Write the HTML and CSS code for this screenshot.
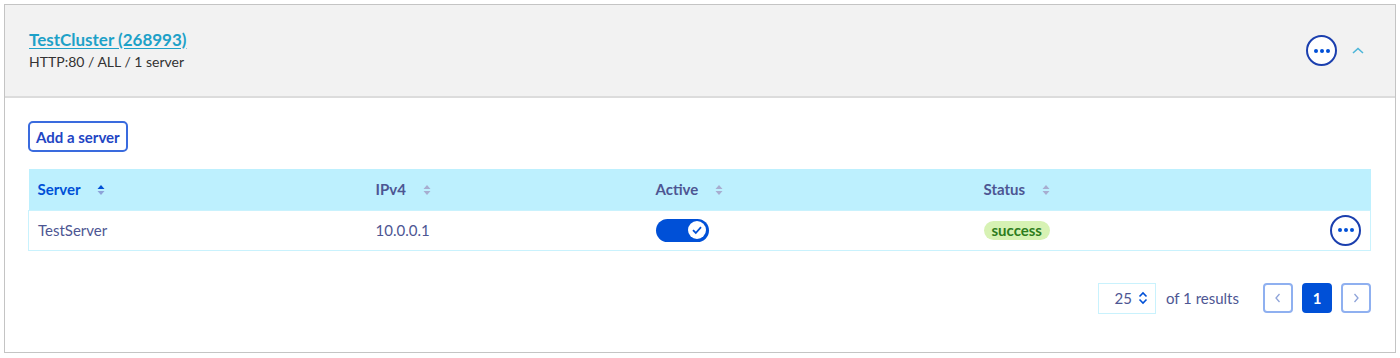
FILE: index.html
```html
<!DOCTYPE html>
<html>
<head>
<meta charset="utf-8">
<link rel="stylesheet" href="styles.css">
</head>
<body>
<div class="card">
  <div class="card-head">
    <div class="titles">
      <a class="title" href="#">TestCluster (268993)</a>
      <div class="subtitle">HTTP:80 / ALL / 1 server</div>
    </div>
    <div class="head-actions">
      <button class="dots"><span></span><span></span><span></span></button>
      <svg class="chev" width="14" height="10" viewBox="0 0 14 10"><path d="M2 7 L7 2.5 L12 7" fill="none" stroke="#4db6d9" stroke-width="1.6"/></svg>
    </div>
  </div>
  <div class="card-body">
    <button class="add-btn">Add a server</button>
    <table class="tbl">
      <colgroup><col class="c1"><col class="c2"><col class="c3"><col class="c4"><col class="c5"></colgroup>
      <thead>
        <tr>
          <th class="sorted">Server <svg class="sort" width="8" height="12" viewBox="0 0 8 12"><path d="M4 1 L7.5 5 H0.5 Z" fill="#0050d7"/><path d="M4 11 L7.5 7 H0.5 Z" fill="#8ea3d9"/></svg></th>
          <th>IPv4 <svg class="sort" width="8" height="12" viewBox="0 0 8 12"><path d="M4 1 L7.5 5 H0.5 Z" fill="#a7add0"/><path d="M4 11 L7.5 7 H0.5 Z" fill="#a7add0"/></svg></th>
          <th>Active <svg class="sort" width="8" height="12" viewBox="0 0 8 12"><path d="M4 1 L7.5 5 H0.5 Z" fill="#a7add0"/><path d="M4 11 L7.5 7 H0.5 Z" fill="#a7add0"/></svg></th>
          <th>Status <svg class="sort" width="8" height="12" viewBox="0 0 8 12"><path d="M4 1 L7.5 5 H0.5 Z" fill="#a7add0"/><path d="M4 11 L7.5 7 H0.5 Z" fill="#a7add0"/></svg></th>
          <th></th>
        </tr>
      </thead>
      <tbody>
        <tr>
          <td>TestServer</td>
          <td>10.0.0.1</td>
          <td><span class="toggle"><span class="knob"><svg width="12" height="10" viewBox="0 0 12 10"><path d="M2 5.2 L4.8 8 L10 2.2" fill="none" stroke="#0050d7" stroke-width="1.8"/></svg></span></span></td>
          <td><span class="badge">success</span></td>
          <td class="act"><button class="dots"><span></span><span></span><span></span></button></td>
        </tr>
      </tbody>
    </table>
    <div class="pager">
      <div class="select">25 <svg width="10" height="14" viewBox="0 0 10 14"><path d="M1.5 5.5 L5 2 L8.5 5.5 M1.5 8.5 L5 12 L8.5 8.5" fill="none" stroke="#0050d7" stroke-width="1.6"/></svg></div>
      <span class="results">of 1 results</span>
      <div class="pages">
        <button class="pg"><svg width="8" height="12" viewBox="0 0 8 12"><path d="M5.5 2 L2 6 L5.5 10" fill="none" stroke="#8ea3d9" stroke-width="1.3"/></svg></button>
        <button class="pg current">1</button>
        <button class="pg"><svg width="8" height="12" viewBox="0 0 8 12"><path d="M2.5 2 L6 6 L2.5 10" fill="none" stroke="#8ea3d9" stroke-width="1.3"/></svg></button>
      </div>
    </div>
  </div>
</div>
</body>
</html>
```
FILE: styles.css
```css
* { box-sizing: border-box; }
body {
  margin: 4px;
  font-family: "Source Sans Pro", Lato, "Noto Sans", sans-serif;
  color: #4d5693;
  background: #fff;
}
.card {
  width: 1392px;
  height: 349px;
  border: 1px solid #c4c4c4;
  box-shadow: 0 1px 1px rgba(0,0,0,0.08);
}
.card-head {
  height: 93px;
  background: #f2f2f2;
  border-bottom: 2px solid #dcdcdc;
  display: flex;
  align-items: center;
  justify-content: space-between;
  padding: 0 30px 0 24px;
}
.titles { display: flex; flex-direction: column; gap: 3px; padding-bottom: 3px; }
.title {
  color: #1da1c8;
  font-weight: 700;
  font-size: 17px;
  text-decoration: underline;
  text-underline-offset: 2px;
}
.subtitle { color: #333; font-size: 14px; }
.head-actions { display: flex; align-items: center; gap: 14px; }
.dots {
  width: 31px;
  height: 31px;
  border-radius: 50%;
  border: 2px solid #1b3fae;
  background: #fff;
  display: flex;
  align-items: center;
  justify-content: center;
  gap: 2px;
  padding: 0;
}
.dots span {
  width: 4px;
  height: 4px;
  border-radius: 50%;
  background: #0050d7;
}
.card-body { padding: 23px 24px 0 23px; }
.add-btn {
  height: 31px;
  padding: 0 6px;
  border: 2px solid #3a6bde;
  border-radius: 5px;
  background: #fff;
  color: #2245c4;
  font-family: inherit;
  font-weight: 700;
  font-size: 15px;
}
.tbl {
  margin-top: 17px;
  width: 1343px;
  border-collapse: collapse;
  font-size: 15px;
}
.c1 { width: 338px; } .c2 { width: 280px; } .c3 { width: 328px; } .c4 { width: 330px; }
.tbl th {
  background: #bdf0fe;
  height: 41px;
  text-align: left;
  padding: 0 9px;
  font-weight: 700;
  color: #4d5693;
}
.tbl th.sorted { color: #0050d7; }
.sort { margin-left: 13px; vertical-align: -1px; }
.tbl tbody tr { border: 1px solid #c9f2fd; }
.tbl td { height: 40px; padding: 0 9px; color: #4d5693; }
.tbl td.act { text-align: right; padding-right: 9px; }
.tbl td.act .dots { display: inline-flex; vertical-align: middle; }
.toggle {
  display: inline-flex;
  align-items: center;
  justify-content: flex-end;
  width: 53px;
  height: 23px;
  border-radius: 12px;
  background: #0050d7;
  padding: 0 3px;
  vertical-align: middle;
}
.knob {
  width: 18px;
  height: 18px;
  border-radius: 50%;
  background: #fff;
  display: flex;
  align-items: center;
  justify-content: center;
}
.badge {
  display: inline-block;
  background: #d7f2b4;
  color: #2e7d1d;
  font-weight: 700;
  font-size: 15px;
  padding: 0 8px;
  line-height: 19px;
  border-radius: 10px;
}
.pager {
  margin-top: 32px;
  display: flex;
  justify-content: flex-end;
  align-items: center;
  font-size: 15px;
}
.select {
  width: 58px;
  height: 31px;
  border: 1px solid #c9f2fd;
  display: flex;
  align-items: center;
  justify-content: flex-end;
  gap: 6px;
  padding-right: 7px;
  color: #4d5693;
}
.results { margin-left: 10px; color: #4d5693; }
.pages { display: flex; gap: 9px; margin-left: 24px; }
.pg {
  width: 30px;
  height: 30px;
  border: 2px solid #8fb0f0;
  border-radius: 4px;
  background: #fff;
  display: flex;
  align-items: center;
  justify-content: center;
  padding: 0;
  font-family: inherit;
}
.pg.current {
  background: #0050d7;
  border-color: #0050d7;
  color: #fff;
  font-weight: 700;
  font-size: 15px;
}
```
